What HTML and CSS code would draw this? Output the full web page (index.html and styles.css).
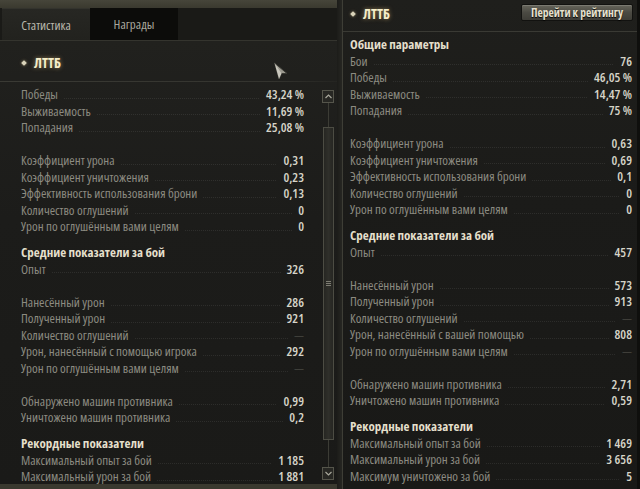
FILE: index.html
```html
<!DOCTYPE html>
<html lang="ru">
<head>
<meta charset="utf-8">
<title>Статистика</title>
<link rel="stylesheet" href="styles.css">
</head>
<body>
<div class="screen">
  <section class="left">
    <nav class="tabs">
      <div class="tab active">Статистика</div>
      <div class="tab">Награды</div>
      <div class="tab-fill"></div>
    </nav>
    <div class="left-body">
      <div class="title"><span class="dia"></span><span class="title-text">ЛТТБ</span></div>
      <div class="scroll-area">
        <div class="scroll-content">
          <div class="list">
            <div class="row"><span class="k">Победы</span><span class="dots"></span><span class="v">43,24 %</span></div>
            <div class="row"><span class="k">Выживаемость</span><span class="dots"></span><span class="v">11,69 %</span></div>
            <div class="row"><span class="k">Попадания</span><span class="dots"></span><span class="v">25,08 %</span></div>
            <div class="spacer"></div>
            <div class="row"><span class="k">Коэффициент урона</span><span class="dots"></span><span class="v">0,31</span></div>
            <div class="row"><span class="k">Коэффициент уничтожения</span><span class="dots"></span><span class="v">0,23</span></div>
            <div class="row"><span class="k">Эффективность использования брони</span><span class="dots"></span><span class="v">0,13</span></div>
            <div class="row"><span class="k">Количество оглушений</span><span class="dots"></span><span class="v">0</span></div>
            <div class="row"><span class="k">Урон по оглушённым вами целям</span><span class="dots"></span><span class="v">0</span></div>
            <div class="head">Средние показатели за бой</div>
            <div class="row"><span class="k">Опыт</span><span class="dots"></span><span class="v">326</span></div>
            <div class="spacer"></div>
            <div class="row"><span class="k">Нанесённый урон</span><span class="dots"></span><span class="v">286</span></div>
            <div class="row"><span class="k">Полученный урон</span><span class="dots"></span><span class="v">921</span></div>
            <div class="row"><span class="k">Количество оглушений</span><span class="dots"></span><span class="v dim">—</span></div>
            <div class="row"><span class="k">Урон, нанесённый с помощью игрока</span><span class="dots"></span><span class="v">292</span></div>
            <div class="row"><span class="k">Урон по оглушённым вами целям</span><span class="dots"></span><span class="v dim">—</span></div>
            <div class="spacer"></div>
            <div class="row"><span class="k">Обнаружено машин противника</span><span class="dots"></span><span class="v">0,99</span></div>
            <div class="row"><span class="k">Уничтожено машин противника</span><span class="dots"></span><span class="v">0,2</span></div>
            <div class="head">Рекордные показатели</div>
            <div class="row"><span class="k">Максимальный опыт за бой</span><span class="dots"></span><span class="v">1 185</span></div>
            <div class="row"><span class="k">Максимальный урон за бой</span><span class="dots"></span><span class="v">1 881</span></div>
          </div>
        </div>
        <div class="scrollbar">
          <div class="sb-btn"><svg width="7" height="5" viewBox="0 0 7 5"><path d="M0.5 4 L3.5 1 L6.5 4" fill="none" stroke="#a9a89c" stroke-width="1.2"/></svg></div>
          <div class="sb-track">
            <div class="sb-pre"></div>
            <div class="sb-thumb"><span class="grip"></span></div>
            <div class="sb-post"></div>
          </div>
          <div class="sb-btn"><svg width="7" height="5" viewBox="0 0 7 5"><path d="M0.5 1 L3.5 4 L6.5 1" fill="none" stroke="#a9a89c" stroke-width="1.2"/></svg></div>
        </div>
      </div>
    </div>
    <svg class="cursor" width="16" height="18" viewBox="0 0 16 18"><path d="M1.5 1 L14 11.5 L8.5 11.5 L6 17 Z" fill="#9c9a90" stroke="#3a3a34" stroke-width="1"/><path d="M1.5 1 L8.5 11.5 L6 17 Z" fill="#c9c7bd"/></svg>
  </section>
  <div class="divider"></div>
  <section class="right">
    <header class="r-head">
      <div class="r-title"><span class="dia"></span><span class="title-text">ЛТТБ</span></div>
      <button class="btn">Перейти к рейтингу</button>
    </header>
    <div class="list r-list">
      <div class="head first">Общие параметры</div>
      <div class="row"><span class="k">Бои</span><span class="dots"></span><span class="v">76</span></div>
      <div class="row"><span class="k">Победы</span><span class="dots"></span><span class="v">46,05 %</span></div>
      <div class="row"><span class="k">Выживаемость</span><span class="dots"></span><span class="v">14,47 %</span></div>
      <div class="row"><span class="k">Попадания</span><span class="dots"></span><span class="v">75 %</span></div>
      <div class="spacer"></div>
      <div class="row"><span class="k">Коэффициент урона</span><span class="dots"></span><span class="v">0,63</span></div>
      <div class="row"><span class="k">Коэффициент уничтожения</span><span class="dots"></span><span class="v">0,69</span></div>
      <div class="row"><span class="k">Эффективность использования брони</span><span class="dots"></span><span class="v">0,1</span></div>
      <div class="row"><span class="k">Количество оглушений</span><span class="dots"></span><span class="v">0</span></div>
      <div class="row"><span class="k">Урон по оглушённым вами целям</span><span class="dots"></span><span class="v">0</span></div>
      <div class="head">Средние показатели за бой</div>
      <div class="row"><span class="k">Опыт</span><span class="dots"></span><span class="v">457</span></div>
      <div class="spacer"></div>
      <div class="row"><span class="k">Нанесённый урон</span><span class="dots"></span><span class="v">573</span></div>
      <div class="row"><span class="k">Полученный урон</span><span class="dots"></span><span class="v">913</span></div>
      <div class="row"><span class="k">Количество оглушений</span><span class="dots"></span><span class="v dim">—</span></div>
      <div class="row"><span class="k">Урон, нанесённый с вашей помощью</span><span class="dots"></span><span class="v">808</span></div>
      <div class="row"><span class="k">Урон по оглушённым вами целям</span><span class="dots"></span><span class="v dim">—</span></div>
      <div class="spacer"></div>
      <div class="row"><span class="k">Обнаружено машин противника</span><span class="dots"></span><span class="v">2,71</span></div>
      <div class="row"><span class="k">Уничтожено машин противника</span><span class="dots"></span><span class="v">0,59</span></div>
      <div class="head">Рекордные показатели</div>
      <div class="row"><span class="k">Максимальный опыт за бой</span><span class="dots"></span><span class="v">1 469</span></div>
      <div class="row"><span class="k">Максимальный урон за бой</span><span class="dots"></span><span class="v">3 656</span></div>
      <div class="row"><span class="k">Максимум уничтожено за бой</span><span class="dots"></span><span class="v">5</span></div>
    </div>
  </section>
</div>
</body>
</html>
```
FILE: styles.css
```css
* { box-sizing: border-box; }
html, body { margin: 0; padding: 0; }
body {
  width: 640px;
  height: 489px;
  overflow: hidden;
  background: #2b2b26;
  font-family: "Open Sans", "DejaVu Sans Condensed", sans-serif;
  font-stretch: 76.5%;
  font-size: 13px;
  color: #8b8a80;
}
.screen {
  display: grid;
  grid-template-columns: 337px 5px 1fr;
  height: 489px;
}
.left {
  position: relative;
  display: flex;
  flex-direction: column;
  padding: 8px 0 5px 0;
  background: linear-gradient(#46453a, #3a392f 8px, #3a392f);
  overflow: hidden;
}
.tabs {
  display: flex;
  height: 33px;
  background: #1a1a17;
  border-bottom: 1px solid #34342e;
  padding-left: 2px;
}
.tab {
  width: 88px;
  display: flex;
  align-items: center;
  justify-content: center;
  color: #a9a79c;
  font-size: 13px;
  background: #0c0c0a;
  white-space: nowrap;
}
.tab.active {
  background: linear-gradient(#272723, #22221e);
  color: #b9b7ab;
  border-top: 1px solid #33332d;
}
.tab-fill { flex: 1; }
.left-body {
  flex: 1;
  display: flex;
  flex-direction: column;
  min-height: 0;
  background: linear-gradient(#21211e, #1c1c1a 40%, #1a1a18);
}
.title {
  display: flex;
  align-items: center;
  height: 41px;
  padding: 14px 0 11px 22px;
  border-bottom: 1px solid;
  border-image: linear-gradient(to right, #3a3a34, #34342f 80%, rgba(52, 52, 47, 0.2)) 1;
}
.scroll-area {
  flex: 1;
  display: flex;
  min-height: 0;
}
.scroll-content {
  flex: 1;
  overflow: hidden;
  min-width: 0;
}
.dia {
  width: 4px;
  height: 4px;
  background: #d9d3ba;
  transform: rotate(45deg);
  margin-right: 8px;
  box-shadow: 0 0 3px rgba(255, 230, 170, 0.5);
}
.title-text {
  font-weight: bold;
  font-size: 14px;
  line-height: 16px;
  color: #f4ecc9;
  text-shadow: 0 0 4px rgba(255, 215, 140, 0.55);
}
.list {
  padding: 4px 17px 0 21px;
}
.row {
  display: flex;
  align-items: center;
  height: 16.5px;
  line-height: 16.5px;
  white-space: nowrap;
}
.k { color: #8c8b81; }
.v { color: #d6d4c8; font-weight: 550; }
.v.dim { color: #5c5b54; font-size: 10px; font-weight: normal; }
.dots {
  flex: 1;
  align-self: flex-end;
  height: 1px;
  margin: 0 6px 4px;
  background-image: linear-gradient(to right, rgba(255, 255, 255, 0.08) 50%, transparent 50%);
  background-size: 2px 1px;
}
.spacer { height: 16.5px; }
.head {
  margin-top: 9.5px;
  height: 16.5px;
  line-height: 16.5px;
  font-weight: bold;
  color: #e4dfcb;
}
.head.first { margin-top: 0; }
.scrollbar {
  width: 14px;
  margin-right: 2px;
  padding-top: 8px;
  padding-bottom: 4px;
  display: flex;
  flex-direction: column;
  align-items: center;
}
.sb-btn {
  width: 12px;
  height: 13px;
  border: 1px solid #55554b;
  background: #272723;
  display: flex;
  align-items: center;
  justify-content: center;
}
.sb-track {
  flex: 1;
  width: 12px;
  display: flex;
  flex-direction: column;
  align-items: center;
}
.sb-pre { height: 24px; width: 1px; background: #3c3c35; }
.sb-post { flex: 1; width: 1px; background: #3c3c35; }
.sb-thumb {
  height: 313px;
  width: 11px;
  border: 1px solid #4c4c43;
  background: linear-gradient(to right, #262622, #2f2f2a 50%, #262622);
  display: flex;
  align-items: center;
  justify-content: center;
}
.grip {
  width: 5px;
  height: 5px;
  border-top: 1px solid #7d7c72;
  border-bottom: 1px solid #7d7c72;
  position: relative;
}
.grip::after {
  content: "";
  position: absolute;
  left: 0;
  right: 0;
  top: 1px;
  height: 1px;
  background: #7d7c72;
}
.cursor {
  position: absolute;
  left: 273px;
  top: 62px;
}
.divider {
  background: linear-gradient(to right, #1c1c19, #262622);
}
.right {
  border-left: 1px solid #3e3e36;
  border-right: 3px solid #0f0f0d;
  background: linear-gradient(#1f1f1c, #1b1b19 40%, #191917);
  overflow: hidden;
}
.r-head {
  display: flex;
  align-items: flex-start;
  justify-content: space-between;
  height: 32px;
  border-bottom: 1px solid #3a3a34;
  padding: 4px 4px 0 0;
}
.r-title {
  display: flex;
  align-items: center;
  padding: 2px 0 0 8px;
}
.btn {
  width: 112px;
  height: 17px;
  padding: 0;
  border: 1px solid #121210;
  border-radius: 2px;
  background: linear-gradient(#66655b, #4b4a43 50%, #3e3d37);
  box-shadow: inset 0 1px 0 rgba(255, 255, 255, 0.15);
  font-family: inherit;
  font-stretch: 76.5%;
  font-size: 11.5px;
  font-weight: bold;
  line-height: 15px;
  white-space: nowrap;
  color: #e6e1cf;
  text-shadow: 0 1px 1px #000;
}
.r-list {
  padding: 4px 5px 0 7px;
}
```
